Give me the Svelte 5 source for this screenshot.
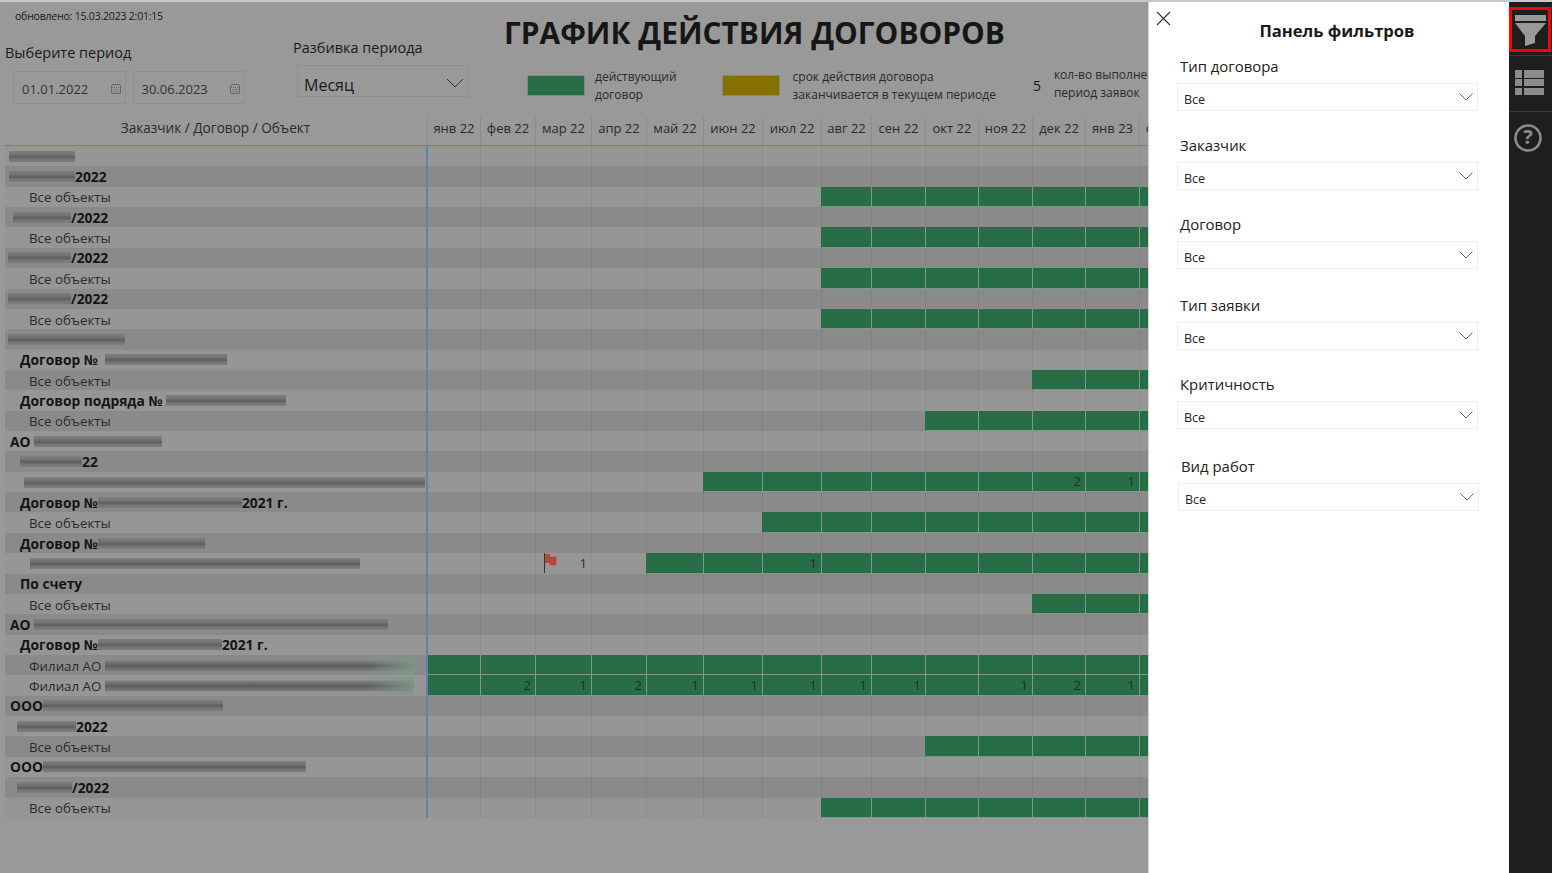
<script>
  const months = ['янв 22','фев 22','мар 22','апр 22','май 22','июн 22','июл 22','авг 22','сен 22','окт 22','ноя 22','дек 22','янв 23','фев 23'];

  // pad = left offset of the row text, parts are [text] or [null, gap, width]
  const rows = [
    { pad: 4, parts: [[null, 0, 66]] },
    { pad: 4, bold: 1, parts: [[null, 0, 66], ['2022']] },
    { pad: 24, parts: [['Все объекты']], from: 7 },
    { pad: 8, bold: 1, parts: [[null, 0, 58], ['/2022']] },
    { pad: 24, parts: [['Все объекты']], from: 7 },
    { pad: 3, bold: 1, parts: [[null, 0, 63], ['/2022']] },
    { pad: 24, parts: [['Все объекты']], from: 7 },
    { pad: 3, bold: 1, parts: [[null, 0, 63], ['/2022']] },
    { pad: 24, parts: [['Все объекты']], from: 7 },
    { pad: 3, parts: [[null, 0, 117]] },
    { pad: 15, bold: 1, parts: [['Договор №'], [null, 7, 122]] },
    { pad: 24, parts: [['Все объекты']], from: 11 },
    { pad: 15, bold: 1, parts: [['Договор подряда №'], [null, 3, 120]] },
    { pad: 24, parts: [['Все объекты']], from: 9 },
    { pad: 5, bold: 1, parts: [['АО'], [null, 3, 128]] },
    { pad: 15, bold: 1, parts: [[null, 0, 62], ['22']] },
    { pad: 19, parts: [[null, 0, 401]], from: 5, nums: { 11: 2, 12: 1 } },
    { pad: 15, bold: 1, parts: [['Договор №'], [null, 0, 144], ['2021 г.']] },
    { pad: 24, parts: [['Все объекты']], from: 6 },
    { pad: 15, bold: 1, parts: [['Договор №'], [null, 0, 107]] },
    { pad: 25, parts: [[null, 0, 330]], from: 4, flag: 2, nums: { 2: 1, 6: 1 } },
    { pad: 15, bold: 1, parts: [['По счету']] },
    { pad: 24, parts: [['Все объекты']], from: 11 },
    { pad: 5, bold: 1, parts: [['АО'], [null, 3, 354]] },
    { pad: 15, bold: 1, parts: [['Договор №'], [null, 0, 124], ['2021 г.']] },
    { pad: 24, parts: [['Филиал АО'], [null, 4, 309, true]], from: 0 },
    { pad: 24, parts: [['Филиал АО'], [null, 4, 309, true]], from: 0, nums: { 1: 2, 2: 1, 3: 2, 4: 1, 5: 1, 6: 1, 7: 1, 8: 1, 10: 1, 11: 2, 12: 1 } },
    { pad: 5, bold: 1, parts: [['ООО'], [null, 0, 180]] },
    { pad: 12, bold: 1, parts: [[null, 0, 59], ['2022']] },
    { pad: 24, parts: [['Все объекты']], from: 9 },
    { pad: 5, bold: 1, parts: [['ООО'], [null, 0, 263]] },
    { pad: 12, bold: 1, parts: [[null, 0, 55], ['/2022']] },
    { pad: 24, parts: [['Все объекты']], from: 7 }
  ];

  const filters = [
    { label: 'Тип договора', gap: 14, shift: 0 },
    { label: 'Заказчик', gap: 24, shift: 0 },
    { label: 'Договор', gap: 24, shift: 0 },
    { label: 'Тип заявки', gap: 26, shift: 0 },
    { label: 'Критичность', gap: 24, shift: 0 },
    { label: 'Вид работ', gap: 27, shift: 1 }
  ];

  function isOn(row, i) {
    return row.from !== undefined && i >= row.from;
  }
</script>

<div class="page">
  <main class="report">
    <header class="top">
      <div class="period">
        <div class="updated">обновлено: 15.03.2023 2:01:15</div>
        <div class="caption">Выберите период</div>
        <div class="dates">
          {#each ['01.01.2022', '30.06.2023'] as d}
            <div class="date">
              <span>{d}</span>
              <svg width="10" height="10" viewBox="0 0 10 10" fill="none" stroke="#666">
                <rect x="0.5" y="0.5" width="9" height="9" rx="1.5" />
                <path d="M1 3.5h8M2.5 5.5h5M2.5 7.5h5" stroke-dasharray="1 1" />
              </svg>
            </div>
          {/each}
        </div>
      </div>
      <div class="split">
        <div class="caption">Разбивка периода</div>
        <div class="month-select">
          <span>Месяц</span>
          <svg width="18" height="10" viewBox="0 0 18 10" fill="none" stroke="#333"><path d="M1 1l8 8 8-8" /></svg>
        </div>
      </div>
      <div class="head-right">
        <h1>ГРАФИК ДЕЙСТВИЯ ДОГОВОРОВ</h1>
        <div class="legend">
          <i class="swatch green"></i>
          <div class="legend-text first">действующий<br />договор</div>
          <i class="swatch olive"></i>
          <div class="legend-text second">срок действия договора<br />заканчивается в текущем периоде</div>
          <div class="five">5</div>
          <div class="legend-text third">кол-во выполненных за<br />период заявок</div>
        </div>
      </div>
    </header>

    <div class="table">
      <div class="row head">
        <div class="name">Заказчик / Договор / Объект</div>
        {#each months as m}
          <div class="cell">{m}</div>
        {/each}
      </div>
      {#each rows as row, r}
        <div class="row" class:dark={r % 2 === 1}>
          <div class="name" class:bold={row.bold} style="padding-left:{row.pad}px">
            {#each row.parts as part}
              {#if part[0]}
                <span>{part[0]}</span>
              {:else}
                <span class="redact" class:fade={part[3]} style="margin-left:{part[1]}px;width:{part[2]}px"></span>
              {/if}
            {/each}
          </div>
          {#each months as m, i}
            <div class="cell" class:on={isOn(row, i)} class:start={row.from === i}>
              {#if row.flag === i}
                <svg class="flag" width="14" height="20" viewBox="0 0 14 20">
                  <path d="M0.5 0v20" stroke="#333" />
                  <path d="M1 1h5v9H1z" fill="#b5493a" />
                  <path d="M6 4h6v8H6z" fill="#b5493a" stroke="#a84030" stroke-width="0.5" />
                </svg>
              {/if}
              {row.nums?.[i] ?? ''}
            </div>
          {/each}
        </div>
      {/each}
    </div>
  </main>

  <aside class="filters">
    <button class="close" aria-label="Закрыть">
      <svg width="15" height="15" viewBox="0 0 15 15" stroke="#333" stroke-width="1.1"><path d="M1 1l13 13M14 1L1 14" /></svg>
    </button>
    <h2>Панель фильтров</h2>
    {#each filters as f}
      <div class="filter" style="margin-top:{f.gap}px;margin-left:{f.shift}px">
        <div class="filter-label">{f.label}</div>
        <div class="filter-box">
          <span>Все</span>
          <svg width="14" height="8" viewBox="0 0 14 8" fill="none" stroke="#5b6b7b"><path d="M0.5 0.5L7 7l6.5-6.5" /></svg>
        </div>
      </div>
    {/each}
  </aside>

  <nav class="rail">
    <div class="rail-item first-item">
      <div class="active">
        <svg width="33" height="33" viewBox="0 0 33 33" fill="#999">
          <path d="M1 1h31v6H1z" />
          <path d="M1 9h31L21 22v7l-10 3V22z" />
        </svg>
      </div>
    </div>
    <div class="rail-item list-item">
      <svg width="29" height="25" viewBox="0 0 29 25" fill="#8c8c8c">
        <path d="M0 0h7v8H0zM9 0h20v8H9zM0 9h7v7H0zM9 9h20v7H9zM0 18h7v7H0zM9 18h20v7H9z" />
      </svg>
    </div>
    <div class="help">
      <svg width="30" height="30" viewBox="0 0 30 30">
        <circle cx="15" cy="15" r="12.5" fill="none" stroke="#8c8c8c" stroke-width="2.6" />
        <text x="15" y="21" text-anchor="middle" fill="#8c8c8c">?</text>
      </svg>
    </div>
  </nav>
</div>

<style>
  :global(body) {
    margin: 0;
    background: #999;
    font-family: "Open Sans", "Noto Sans", sans-serif;
  }

  .page {
    display: flex;
    width: 1552px;
    height: 873px;
    overflow: hidden;
    box-sizing: border-box;
    border-top: 2px solid #c8c8c8;
    color: #1a1a1a;
  }

  .report {
    width: 1148px;
    flex-shrink: 0;
    overflow: hidden;
    background: #999;
  }

  .top {
    display: flex;
    height: 115px;
  }

  .period {
    width: 288px;
    flex-shrink: 0;
    padding-left: 5px;
    box-sizing: border-box;
  }

  .updated {
    font-size: 10.5px;
    letter-spacing: -0.2px;
    margin: 7px 0 0 10px;
    line-height: 14px;
  }

  .caption {
    font-size: 14.5px;
    line-height: 20px;
  }

  .period .caption {
    margin-top: 20px;
  }

  .dates {
    display: flex;
    gap: 7px;
    margin: 8px 0 0 8px;
  }

  .date {
    width: 112.5px;
    height: 33px;
    box-sizing: border-box;
    border: 1px solid #8f8f8f;
    display: flex;
    align-items: center;
    justify-content: space-between;
    padding: 2px 4px 0 8px;
    font-size: 13px;
    color: #333;
  }

  .split {
    width: 216px;
    flex-shrink: 0;
    padding-left: 5px;
    box-sizing: border-box;
  }

  .split .caption {
    margin-top: 36px;
  }

  .month-select {
    margin: 7px 0 0 4px;
    width: 172px;
    height: 32px;
    box-sizing: border-box;
    border: 1px solid #8f8f8f;
    display: flex;
    align-items: center;
    justify-content: space-between;
    padding: 0 4px 0 6px;
    font-size: 16px;
  }

  .month-select span {
    padding-top: 7px;
  }

  .month-select svg {
    margin-top: 3px;
  }

  .head-right {
    flex: 1;
    min-width: 0;
  }

  h1 {
    margin: 13px 0 0;
    font-size: 29.9px;
    line-height: 36px;
    font-weight: 700;
    white-space: nowrap;
    color: #161616;
  }

  .legend {
    display: flex;
    align-items: center;
    margin-top: 17px;
    margin-left: 23px;
    white-space: nowrap;
  }

  .swatch {
    width: 58px;
    height: 21px;
    box-sizing: border-box;
    border: 1px solid #7f8a80;
    flex-shrink: 0;
  }

  .green {
    background: #276e47;
  }

  .olive {
    background: #857000;
    margin-left: 45px;
  }

  .legend-text {
    font-size: 12px;
    line-height: 17.5px;
    color: #2a2a2a;
  }

  .first {
    margin-left: 10px;
  }

  .second {
    margin-left: 13px;
  }

  .five {
    margin-left: 37px;
    font-size: 14px;
  }

  .third {
    margin-left: 13px;
    margin-top: -4px;
  }

  .table {
    margin-left: 5px;
    width: 1200px;
  }

  .row {
    display: grid;
    grid-template-columns: 421px 54px 55px 56px 55px 57px 59px 59px 50px 54px 53px 54px 53px 54px 55px;
    height: 20.37px;
    background: #969696;
  }

  .row.dark {
    background: #8a8a8a;
  }

  .row.head {
    height: 29px;
    background: #999;
    border-bottom: 1px solid #5f83ab;
    box-sizing: border-box;
  }

  .head .name {
    justify-content: center;
    padding: 0 0 8px;
    font-size: 13.6px;
    color: #2a2a2a;
  }

  .head .cell {
    justify-content: center;
    padding: 0 0 6px;
    font-size: 13px;
    color: #2a2a2a;
  }

  .head .name + .cell {
    border-left: 1px solid #8c8c8c;
    margin-left: 1px;
  }

  .name {
    display: flex;
    align-items: center;
    white-space: nowrap;
    overflow: hidden;
    box-sizing: border-box;
    padding-top: 1px;
    font-size: 13.3px;
    color: #2a2a2a;
  }

  .name.bold {
    padding-top: 0;
    font-weight: 700;
    font-size: 13.8px;
    color: #141414;
  }

  .redact {
    height: 11px;
    background: linear-gradient(180deg, #7e7e7e, #747474 30%, #5e5e5e 55%, #747474 75%, #7e7e7e);
    filter: blur(0.4px);
  }

  .redact.fade {
    height: 18px;
    background:
      linear-gradient(90deg, transparent 85%, rgba(125, 150, 135, 0.95) 100%),
      linear-gradient(180deg, transparent 18%, #7e7e7e 22%, #5c5c5c 50%, #7e7e7e 78%, transparent 82%);
  }

  .cell {
    position: relative;
    display: flex;
    align-items: center;
    justify-content: flex-end;
    padding-right: 4px;
    box-sizing: border-box;
    border-left: 1px solid #8c8c8c;
    font-size: 13px;
    color: #2a2a2a;
  }

  .dark .cell {
    border-left-color: #828282;
  }

  .name + .cell {
    border-left: 2px solid #5f83ab;
  }

  .cell.on {
    background: #276e47;
    border-left-color: #7c9a88;
    border-bottom: 1px solid #7c9a88;
  }

  .cell.start {
    border-left-color: #276e47;
  }

  .name + .cell.on {
    border-left-color: #5f83ab;
  }

  .flag {
    position: absolute;
    left: 8px;
    top: 0;
  }

  .filters {
    width: 361px;
    flex-shrink: 0;
    background: #fff;
    box-sizing: border-box;
    border-left: 1px solid #d0d0d0;
    padding-left: 28px;
    position: relative;
  }

  .close {
    position: absolute;
    left: 7px;
    top: 9px;
    padding: 0;
    border: 0;
    background: none;
    line-height: 0;
  }

  h2 {
    margin: 18px 0 0;
    width: 320px;
    text-align: center;
    font-size: 16.6px;
    line-height: 22px;
    font-weight: 700;
    color: #1a1a1a;
  }

  .filter-label {
    font-size: 14.9px;
    font-weight: 500;
    line-height: 20px;
    margin-left: 3px;
    color: #222;
  }

  .filter-box {
    margin-top: 7px;
    width: 301px;
    height: 28px;
    box-sizing: border-box;
    border: 1px solid #eee;
    display: flex;
    align-items: center;
    justify-content: space-between;
    padding: 0 4px 0 6px;
    font-size: 12.5px;
    color: #222;
  }

  .filter-box span {
    padding-top: 4px;
  }

  .rail {
    width: 43px;
    background: #1e1e1e;
  }

  .rail-item {
    display: flex;
    justify-content: center;
    height: 56px;
    box-sizing: border-box;
    padding-top: 14px;
    border-bottom: 1px solid #3a3a3a;
  }

  .list-item {
    padding-right: 2px;
  }

  .first-item {
    height: 54px;
    padding: 5px 0 0 0;
    justify-content: flex-start;
  }

  .active {
    width: 42px;
    height: 45px;
    box-sizing: border-box;
    border: 3px solid #f00;
    padding: 4px 0 0 2px;
  }

  .help {
    display: flex;
    justify-content: center;
    padding: 11px 5px 0 0;
  }

  .help text {
    font-size: 20px;
    font-weight: 700;
  }
</style>
